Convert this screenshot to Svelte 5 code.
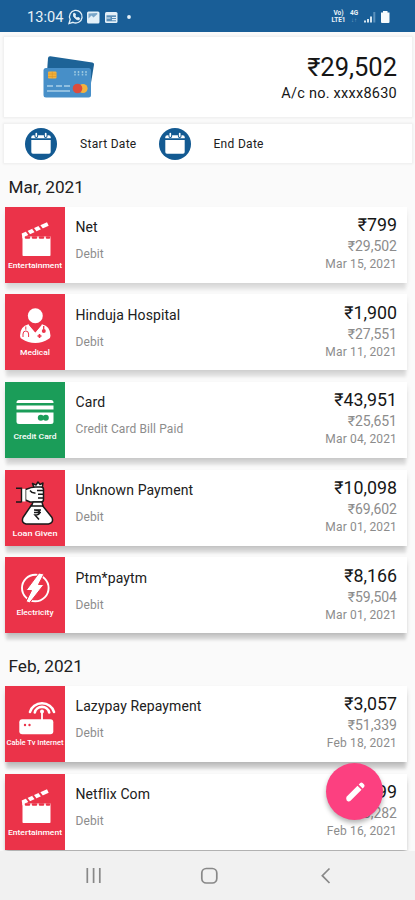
<script lang="ts">
	type Kind = 'clapper' | 'medical' | 'card' | 'loan' | 'power' | 'router';

	interface Transaction {
		kind: Kind;
		title: string;
		note: string;
		amount: string;
		balance: string;
		date: string;
	}

	// label under each category icon: text, baseline and width inside the 60x76 tile
	const tiles: Record<Kind, { label: string; y: number; width: number; size: number }> = {
		clapper: { label: 'Entertainment', y: 60.5, width: 54, size: 7.5 },
		medical: { label: 'Medical', y: 60.5, width: 30, size: 7.5 },
		card: { label: 'Credit Card', y: 57, width: 43, size: 7.5 },
		loan: { label: 'Loan Given', y: 65.8, width: 45, size: 7.5 },
		power: { label: 'Electricity', y: 58, width: 37, size: 7.5 },
		router: { label: 'Cable Tv Internet', y: 59, width: 57, size: 6.8 }
	};

	const months: { name: string; items: Transaction[] }[] = [
		{
			name: 'Mar, 2021',
			items: [
				{ kind: 'clapper', title: 'Net', note: 'Debit', amount: '₹799', balance: '₹29,502', date: 'Mar 15, 2021' },
				{ kind: 'medical', title: 'Hinduja Hospital', note: 'Debit', amount: '₹1,900', balance: '₹27,551', date: 'Mar 11, 2021' },
				{ kind: 'card', title: 'Card', note: 'Credit Card Bill Paid', amount: '₹43,951', balance: '₹25,651', date: 'Mar 04, 2021' },
				{ kind: 'loan', title: 'Unknown Payment', note: 'Debit', amount: '₹10,098', balance: '₹69,602', date: 'Mar 01, 2021' },
				{ kind: 'power', title: 'Ptm*paytm', note: 'Debit', amount: '₹8,166', balance: '₹59,504', date: 'Mar 01, 2021' }
			]
		},
		{
			name: 'Feb, 2021',
			items: [
				{ kind: 'router', title: 'Lazypay Repayment', note: 'Debit', amount: '₹3,057', balance: '₹51,339', date: 'Feb 18, 2021' },
				{ kind: 'clapper', title: 'Netflix Com', note: 'Debit', amount: '₹799', balance: '₹48,282', date: 'Feb 16, 2021' }
			]
		}
	];

	// shadows get darker further down the screen
	function shade(month: number, item: number) {
		return 0.1 + (month * 5 + item) * 0.018;
	}
</script>

{#snippet calendar()}
	<svg class="calendar" viewBox="0 0 32 32" aria-hidden="true">
		<circle cx="16" cy="16" r="16" fill="#135a92" />
		<path d="M6.3 10.3V9.2q0-2 2-2h15.400q2 0 2 2v1.100z" fill="#fff" />
		<path d="M6.3 12h19.400v12q0 1.700-1.700 1.700H8q-1.700 0-1.700-1.700z" fill="#fff" />
		<path d="M11.3 5.200v3M20.700 5.200v3" stroke="#135a92" stroke-width="3.6" stroke-linecap="round" />
		<path d="M11.3 5.500v2.600M20.700 5.500v2.600" stroke="#fff" stroke-width="1.7" stroke-linecap="round" />
	</svg>
{/snippet}

{#snippet tile(kind: Kind)}
	<svg class="tile" class:credit={kind === 'card'} viewBox="0 0 60 76">
		{#if kind === 'clapper'}
			<g fill="#fff">
				<path d="M17.5 29.500h28v18.800q0 .8-.8.800H18.300q-.8 0-.8-.800z" />
				<path d="M16.7 26.500 42 15.300l1.700 3.500L20 29.500l-2.500 2z" />
			</g>
			<g fill="none" stroke="#eb3349">
				<path d="m21.5 24 3 4M27.800 21.200l3 4M34.200 18.400l3 4" stroke-width="2" />
				<path d="M21 30.500h3M28 30.500h3M35 30.500h3M42 30.500h2" stroke-width="2.6" stroke-linecap="round" />
			</g>
		{:else if kind === 'medical'}
			<circle cx="30.3" cy="21.8" r="7.5" fill="#fff" />
			<path d="M23.500 30.200q-8.500 2-8.500 11.500 0 2.300 2 3.400 6 3.900 13.300 3.900t13.200-3.900q2-1.100 2-3.400 0-9.500-8.500-11.500l-6.700 8z" fill="#fff" />
			<g fill="none" stroke="#eb3349">
				<path d="M20.800 32.500v3.200M18 43v-3q0-3 2.800-3t2.800 3v3" stroke-width="1" />
				<path d="M38.700 32v3.500" stroke-width="1.3" />
				<path d="m24.500 30.500 5.800 7 5.800-7" stroke-width="1.3" />
			</g>
			<circle cx="38.8" cy="37" r="2" fill="#eb3349" />
			<path d="M32.500 42h4M34.500 40v4" stroke="#eb3349" stroke-width="1.6" />
		{:else if kind === 'card'}
			<g fill="#fff">
				<path d="M11.500 20.500q0-2.500 2.500-2.500h32q2.500 0 2.500 2.500v.5h-37z" />
				<path d="M11.500 23.500h37v4h-37z" />
				<path d="M11.500 30.500h37v9q0 2.500-2.500 2.500H14q-2.500 0-2.500-2.500z" />
			</g>
			<g fill="#1b9d59">
				<circle cx="35.8" cy="35.8" r="3" />
				<circle cx="40.8" cy="35.8" r="3" />
				<path d="M36 34.300h5v3h-5z" />
			</g>
		{:else if kind === 'loan'}
			<g stroke="#191919" stroke-width="1.5" stroke-linejoin="round" fill="#fff">
				<path d="M26.500 35 18 47.500q-2 5.500 3 6.500h22.500q5.500-1 3.500-6.500L37 35z" />
				<path d="m29.500 19-2-5.500 3.500 1.500 2-3 2 2.500 3-1.500-1 6z" />
				<path d="M20.500 19.500q6-2.500 10-2.500H36q2.500 0 2.500 2.500v10q0 2.500-2.500 2.500H25l-4.500-2z" />
				<path d="M28 32h9l1 4H26.500z" />
			</g>
			<path d="M16 18.800h4.500v12.700H16z" fill="#fff" />
			<path d="M11 18.300h5.500v14M11 32h5.500M32 20.500h6.500M33 24.300h5.500M33 28h5.500M25 20.500q2 3 5.500 2.500" stroke="#191919" stroke-width="1.4" fill="none" />
			<path d="M29 40h7M29 42.500h7M29.500 40q5 0 5 2.500t-4.500 2.500l4 4.500" stroke="#191919" stroke-width="1.5" fill="none" />
		{:else if kind === 'power'}
			<circle cx="30.3" cy="31" r="13.3" fill="none" stroke="#fff" stroke-width="1.9" />
			<path d="m34 16 5 1-5.500 10.500H39L24.500 46 21 44.500l5.500-11H21z" fill="#fff" stroke="#eb3349" stroke-width="1" />
		{:else}
			<rect x="14.3" y="33.3" width="34" height="15" rx="3" fill="#fff" />
			<g fill="none" stroke="#fff">
				<path d="M37 25v9" stroke-width="1.8" />
				<path d="M25 26a12.300 11.200 0 0 1 24 0M29.800 26.500a7.300 6.700 0 0 1 14.400 0" stroke-width="2.6" stroke-linecap="round" />
			</g>
			<circle cx="37" cy="25.5" r="2" fill="#fff" />
			<circle cx="20" cy="39" r="1.2" fill="#eb3349" />
			<circle cx="24.5" cy="39" r="1.2" fill="#eb3349" />
		{/if}
		<text
			x="30"
			y={tiles[kind].y}
			font-size={tiles[kind].size}
			textLength={tiles[kind].width}
			lengthAdjust="spacingAndGlyphs">{tiles[kind].label}</text
		>
	</svg>
{/snippet}

<div class="screen">
	<div class="status">
		<span class="clock">13:04</span>
		<svg class="notifications" viewBox="0 0 66 16" aria-hidden="true">
			<g fill="none" stroke="#e4f0f8">
				<path d="m1 14.500 1.200-4A6.300 6.300 0 1 1 5 13.300z" stroke-width="1.3" />
				<path d="M5.500 4.500q-.8 3 1.600 4.800 2 2 4 1.500l.7-1.500-1.800-1-1 .8Q7.300 8 7 6.800l.7-.8-.8-1.700z" stroke-width=".8" fill="#e4f0f8" />
			</g>
			<rect x="19" y="2.5" width="12.5" height="12" rx="1.5" fill="#e4f0f8" />
			<path d="m20.500 9.500 3-3 2 2 4-3.500-.5-1-8.500.5z" fill="#5f94bd" opacity=".8" />
			<rect x="37" y="3" width="12.5" height="11" rx="1.5" fill="#e4f0f8" />
			<path d="M38.500 6.300h9.500v6h-9.500z" fill="#5b8fb8" />
			<path d="M38.500 9h4M44 8.500h4M44 10.700h4" stroke="#e4f0f8" stroke-width="1.2" />
			<circle cx="61" cy="8" r="1.9" fill="#e4f0f8" />
		</svg>
		<div class="volte"><span>Vo)</span><span>LTE1</span></div>
		<div class="network"><span>4G</span><span class="arrows">↓↑</span></div>
		<svg class="signal" viewBox="0 0 28 16" aria-hidden="true">
			<path d="M1 13.500h2v-2H1zM4 13.500h2V10H4zM7 13.500h2v-6H7z" fill="#d5e5f0" />
			<path d="M10.300 13.500h2V3h-2z" fill="#5c91bc" />
			<path d="M18 3.500h2V2h4.500v1.500h2V13q0 1-1 1H19q-1 0-1-1z" fill="#f6fafc" />
		</svg>
	</div>

	<div class="account">
		<svg class="cards" viewBox="0 0 54 44" aria-hidden="true">
			<path d="m8.300 1.200 42 6.200q2 .4 1.700 2.400L47.500 37 4 31 6 3q.3-2 2.300-1.800z" fill="#1d6397" />
			<rect x="1.500" y="13" width="47.500" height="29.500" rx="2.500" fill="#478fc8" />
			<rect x="6" y="16.500" width="8.500" height="7" rx="1" fill="#f3b13d" />
			<path d="M6 19h8.500M6 21.500h8.500M10.300 16.500v7" stroke="#d99527" stroke-width=".6" />
			<path d="M33 16v4.500M36.500 16v4.500M40.500 16v4.500M44 16v4.500" stroke="#9ac8df" stroke-width="1.5" stroke-dasharray="2 .8" />
			<path d="M5 31h6M14 31h6M22 31h6M5 36h23" stroke="#a9d0e7" stroke-width="1.5" />
			<circle cx="41" cy="33.500" r="4.600" fill="#f4b23d" />
			<circle cx="35.500" cy="33.500" r="4.800" fill="#dc4c3d" />
		</svg>
		<div class="totals">
			<span class="total">₹29,502</span>
			<span class="number">A/c no. xxxx8630</span>
		</div>
	</div>

	<div class="filters">
		<div class="filter">{@render calendar()}<span>Start Date</span></div>
		<div class="filter">{@render calendar()}<span>End Date</span></div>
	</div>

	{#each months as month, m}
		<section>
			<h2>{month.name}</h2>
			<div class="list">
				{#each month.items as item, i}
					<article style={`--shade:${shade(m, i)}`}>
						{@render tile(item.kind)}
						<div class="info">
							<span class="title">{item.title}</span>
							<span class="note">{item.note}</span>
						</div>
						<div class="figures">
							<span class="amount">{item.amount}</span>
							<span class="balance">{item.balance}</span>
							<span class="date">{item.date}</span>
						</div>
					</article>
				{/each}
			</div>
		</section>
	{/each}

	<button class="fab" aria-label="Edit">
		<svg viewBox="0 0 24 24">
			<path d="m3.500 16.800 11-11 4 4-11 11q-1.200.9-2.800.4l-1-.6q-.9-2-.2-3.800zM15.700 4.600l1.500-1.500q1.200-1 2.400 0l1.500 1.500q1 1.200 0 2.400l-1.500 1.500z" fill="#fff" />
		</svg>
	</button>

	<nav>
		<svg viewBox="0 0 415 49" aria-hidden="true">
			<g fill="none" stroke="#888" stroke-width="1.7">
				<path d="M87.300 17v15M93.600 17v15M99.800 17v15" />
				<rect x="201.800" y="17.500" width="15" height="14.500" rx="4.500" />
				<path d="m329.500 17.500-7.200 7.200 7.200 7.300" />
			</g>
		</svg>
	</nav>
</div>

<style>
	:global(body) {
		margin: 0;
	}

	.screen {
		position: relative;
		display: flex;
		flex-direction: column;
		width: 415px;
		height: 900px;
		overflow: hidden;
		background: #fafafa;
		color: #202020;
		font-family: Roboto, 'Liberation Sans', sans-serif;
	}

	.status {
		display: flex;
		flex: none;
		align-items: center;
		box-sizing: border-box;
		height: 32px;
		padding: 1px 32px 0 27px;
		background: #195e97;
		color: #e9f2f8;
	}

	.clock {
		width: 41px;
		font-size: 14.6px;
	}

	.notifications {
		width: 66px;
		height: 16px;
	}

	.volte,
	.network {
		display: flex;
		flex-direction: column;
		align-items: center;
		font-size: 6.5px;
		font-weight: 700;
		line-height: 6.5px;
	}

	.volte {
		width: 17px;
		margin-left: auto;
	}

	.network {
		width: 10px;
		margin-left: 2px;
	}

	.arrows {
		color: #79a5c7;
		font-size: 6px;
	}

	.signal {
		width: 28px;
		height: 16px;
		margin-right: -8px;
		margin-left: 4px;
	}

	.account,
	.filters {
		display: flex;
		flex: none;
		align-items: center;
		box-sizing: border-box;
		margin: 0 3px 0 4px;
		background: #fff;
		box-shadow: 0 0 2px 1px #ececec;
	}

	.account {
		justify-content: space-between;
		height: 80px;
		margin-top: 5px;
		padding: 0 15px 0 37.5px;
	}

	.cards {
		width: 54px;
		height: 44px;
		margin-top: -1px;
	}

	.totals {
		display: flex;
		flex-direction: column;
		align-items: flex-end;
		padding-top: 3px;
		color: #161616;
	}

	.total {
		font-size: 25.5px;
		line-height: 30px;
	}

	.number {
		font-size: 14.5px;
		line-height: 24px;
		letter-spacing: 0.25px;
	}

	.filters {
		height: 39px;
		margin-top: 7px;
		padding-left: 21px;
	}

	.filter {
		display: flex;
		align-items: center;
		gap: 23px;
		width: 133.5px;
		font-size: 12px;
		letter-spacing: 0.3px;
		white-space: nowrap;
	}

	.calendar {
		flex: none;
		width: 32px;
		height: 32px;
	}

	section {
		flex: none;
	}

	h2 {
		margin: 0;
		padding: 11.5px 8.5px 8px;
		font-size: 17.2px;
		font-weight: 400;
		line-height: 24px;
	}

	.list {
		display: flex;
		flex-direction: column;
		gap: 11.7px;
		padding: 0 8px 9.2px 5px;
	}

	article {
		display: flex;
		height: 76px;
		background: #fff;
		box-shadow:
			0 8px 3px -1px rgba(0, 0, 0, calc(var(--shade) * 0.75)),
			0 3px 5px -1px rgba(0, 0, 0, var(--shade));
	}

	.tile {
		flex: none;
		width: 60px;
		height: 76px;
		background: #eb3349;
	}

	.tile.credit {
		background: #1b9d59;
	}

	.tile text {
		fill: #fff;
		font-weight: 500;
		text-anchor: middle;
	}

	.info,
	.figures {
		display: flex;
		flex-direction: column;
	}

	.info {
		flex: 1;
		gap: 8px;
		padding: 10.5px 0 0 10.5px;
	}

	.title {
		font-size: 14px;
		line-height: 20px;
		letter-spacing: 0.1px;
	}

	.note {
		color: #8c8c8c;
		font-size: 12px;
		line-height: 18px;
		letter-spacing: 0.1px;
	}

	.figures {
		align-items: flex-end;
		padding: 7.5px 10px 0 0;
		color: #8c8c8c;
	}

	.amount {
		color: #161616;
		font-size: 17.8px;
		line-height: 22px;
	}

	.balance {
		font-size: 14px;
		line-height: 20px;
	}

	.date {
		font-size: 12px;
		line-height: 17px;
		letter-spacing: 0.15px;
	}

	.fab {
		position: absolute;
		top: 763px;
		left: 326px;
		display: flex;
		align-items: center;
		justify-content: center;
		width: 57px;
		height: 57px;
		padding: 0;
		border: 0;
		border-radius: 50%;
		background: #fc4080;
		box-shadow: 0 3px 5px rgba(0, 0, 0, 0.3);
	}

	.fab svg {
		width: 24px;
		height: 24px;
	}

	nav {
		position: absolute;
		bottom: 0;
		left: 0;
		width: 415px;
		height: 49px;
		background: #f1f1f1;
	}

	nav svg {
		display: block;
		width: 415px;
		height: 49px;
	}
</style>
